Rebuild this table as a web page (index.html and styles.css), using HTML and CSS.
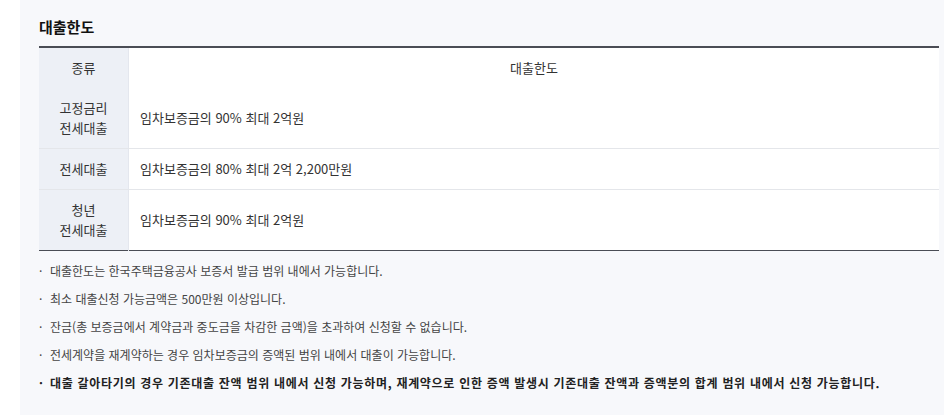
FILE: index.html
```html
<!DOCTYPE html>
<html lang="ko">
<head>
<meta charset="utf-8">
<link rel="stylesheet" href="styles.css">
</head>
<body>
<div class="panel">
  <h2 class="title">대출한도</h2>
  <table class="limit">
    <thead>
      <tr><th class="kind">종류</th><th class="head">대출한도</th></tr>
    </thead>
    <tbody>
      <tr><th class="kind">고정금리<br>전세대출</th><td>임차보증금의 90% 최대 2억원</td></tr>
      <tr><th class="kind">전세대출</th><td>임차보증금의 80% 최대 2억 2,200만원</td></tr>
      <tr><th class="kind">청년<br>전세대출</th><td>임차보증금의 90% 최대 2억원</td></tr>
    </tbody>
  </table>
  <ul class="notes">
    <li>대출한도는 한국주택금융공사 보증서 발급 범위 내에서 가능합니다.</li>
    <li>최소 대출신청 가능금액은 500만원 이상입니다.</li>
    <li>잔금(총 보증금에서 계약금과 중도금을 차감한 금액)을 초과하여 신청할 수 없습니다.</li>
    <li>전세계약을 재계약하는 경우 임차보증금의 증액된 범위 내에서 대출이 가능합니다.</li>
    <li class="strong">대출 갈아타기의 경우 기존대출 잔액 범위 내에서 신청 가능하며, 재계약으로 인한 증액 발생시 기존대출 잔액과 증액분의 합계 범위 내에서 신청 가능합니다.</li>
  </ul>
</div>
</body>
</html>
```
FILE: styles.css
```css
html, body {
  margin: 0;
  padding: 0;
  background: #ffffff;
}
body {
  font-family: "Noto Sans CJK KR", "Noto Sans", sans-serif;
  color: #333;
  height: 415px;
  overflow: hidden;
}
.panel {
  box-sizing: border-box;
  margin-left: 20px;
  background: #f7f8fb;
  padding: 16px 5px 0 19px;
  height: 415px;
}
.title {
  margin: 0 0 8px;
  font-size: 15px;
  line-height: 22px;
  font-weight: 700;
  color: #111;
}
.limit {
  width: 900px;
  border-collapse: collapse;
  border-top: 2px solid #4a4d55;
  border-bottom: 1px solid #4a4d55;
  background: #fff;
  font-size: 13px;
  line-height: 20px;
}
.limit th, .limit td {
  padding: 10px 11px;
  border-bottom: 1px solid #e4e6ea;
  font-weight: 400;
  color: #333;
}
.limit tr:last-child th, .limit tr:last-child td {
  border-bottom: none;
}
.limit .kind {
  width: 67px;
  background: #edf0f6;
  text-align: center;
  border-right: 1px solid #e4e7ee;
}
.limit .head {
  text-align: center;
}
.limit td {
  text-align: left;
}
.notes {
  list-style: none;
  margin: 6px 0 0;
  padding: 0;
  font-size: 12px;
  line-height: 28px;
  color: #444;
}
.notes li {
  position: relative;
  padding-left: 11px;
}
.notes li::before {
  content: "·";
  position: absolute;
  left: 0;
  top: 0;
}
.notes .strong {
  font-weight: 700;
  color: #222;
  letter-spacing: 0.7px;
}
```
